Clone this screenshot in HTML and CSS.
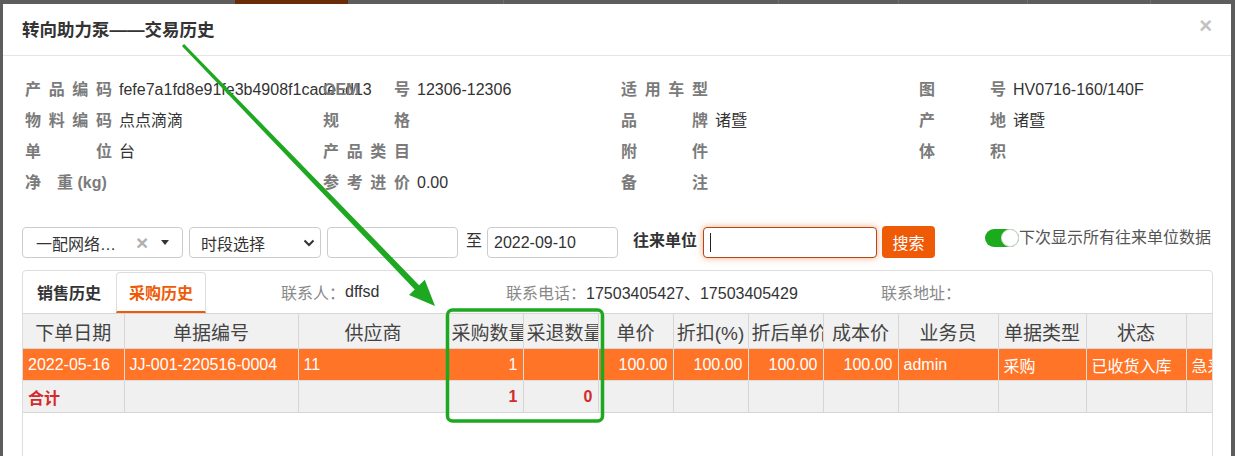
FILE: index.html
```html
<!DOCTYPE html>
<html>
<head>
	<meta charset="utf-8">
	<title>交易历史</title>
	<link rel="stylesheet" href="styles.css">
</head>
<body>
	<div class="strip">
		<span class="strip-btn"></span>
		<span class="strip-sep sep1"></span>
		<span class="strip-sep sep2"></span>
		<span class="strip-sep sep3"></span>
		<span class="strip-sep sep4"></span>
		<span class="strip-sep sep5"></span>
	</div>

	<div class="modal">
		<div class="modal-head">
			<h3 class="modal-title">转向助力泵——交易历史</h3>
			<span class="close">×</span>
		</div>

		<div class="info">
			<div class="field"><span class="lbl">产 品 编 码</span><span class="val">fefe7a1fd8e91fe3b4908f1cade5d13</span></div>
			<div class="field"><span class="lbl">OEM 号</span><span class="val">12306-12306</span></div>
			<div class="field"><span class="lbl">适 用 车 型</span><span class="val"></span></div>
			<div class="field"><span class="lbl">图 号</span><span class="val">HV0716-160/140F</span></div>

			<div class="field"><span class="lbl">物 料 编 码</span><span class="val">点点滴滴</span></div>
			<div class="field"><span class="lbl">规 格</span><span class="val"></span></div>
			<div class="field"><span class="lbl">品 牌</span><span class="val">诸暨</span></div>
			<div class="field"><span class="lbl">产 地</span><span class="val">诸暨</span></div>

			<div class="field"><span class="lbl">单 位</span><span class="val">台</span></div>
			<div class="field"><span class="lbl">产 品 类 目</span><span class="val"></span></div>
			<div class="field"><span class="lbl">附 件</span><span class="val"></span></div>
			<div class="field"><span class="lbl">体 积</span><span class="val"></span></div>

			<div class="field"><span class="lbl lbl-kg">净<span class="gap"></span>重 (kg)</span><span class="val"></span></div>
			<div class="field"><span class="lbl">参 考 进 价</span><span class="val">0.00</span></div>
			<div class="field"><span class="lbl">备 注</span><span class="val"></span></div>
			<div class="field"></div>
		</div>

		<div class="filters">
			<div class="box combo">
				<span class="combo-text">一配网络…</span>
				<span class="combo-clear">×</span>
				<span class="combo-caret"></span>
			</div>
			<div class="box select">
				<span>时段选择</span>
				<svg class="chev" width="12" height="8" viewBox="0 0 12 8"><polyline points="1.5,1.5 6,6 10.5,1.5" fill="none" stroke="#333" stroke-width="2"/></svg>
			</div>
			<div class="box date"></div>
			<span class="to">至</span>
			<div class="box date date-end">2022-09-10</div>
			<span class="unit-lbl">往来单位</span>
			<div class="box unit-input"><span class="cursor"></span></div>
			<button class="btn-search">搜索</button>
			<div class="switch-wrap">
				<span class="switch"><span class="knob"></span></span>
				<span class="switch-text">下次显示所有往来单位数据</span>
			</div>
		</div>

		<div class="panel">
			<div class="tabs">
				<span class="tab">销售历史</span>
				<span class="tab active">采购历史</span>
				<span class="contact c1"><em>联系人：</em>dffsd</span>
				<span class="contact c2"><em>联系电话：</em>17503405427、17503405429</span>
				<span class="contact c3"><em>联系地址：</em></span>
			</div>

			<table class="list">
				<colgroup>
					<col class="w-date">
					<col class="w-no">
					<col class="w-sup">
					<col class="w-75"><col class="w-75"><col class="w-75"><col class="w-75"><col class="w-75"><col class="w-75">
					<col class="w-100">
					<col class="w-88">
					<col class="w-100">
					<col class="w-100">
				</colgroup>
				<tr class="head">
					<th>下单日期</th><th>单据编号</th><th>供应商</th><th>采购数量</th><th>采退数量</th><th>单价</th><th>折扣(%)</th><th>折后单价</th><th>成本价</th><th>业务员</th><th>单据类型</th><th>状态</th><th></th>
				</tr>
				<tr class="row-on">
					<td>2022-05-16</td><td>JJ-001-220516-0004</td><td>11</td><td class="num">1</td><td class="num"></td><td class="num">100.00</td><td class="num">100.00</td><td class="num">100.00</td><td class="num">100.00</td><td>admin</td><td>采购</td><td>已收货入库</td><td>急采</td>
				</tr>
				<tr class="total">
					<td>合计</td><td></td><td></td><td class="num">1</td><td class="num">0</td><td></td><td></td><td></td><td></td><td></td><td></td><td></td><td></td>
				</tr>
			</table>
		</div>
	</div>

	<svg class="mark" width="1235" height="456" viewBox="0 0 1235 456">
		<polygon points="184.1,44 419.1,285.2 424.8,279.7 435,306 409,294.9 414.7,289.4 181.9,46" fill="#1ea822"/>
		<rect x="447.5" y="310" width="155" height="111" rx="5" fill="none" stroke="#1ea822" stroke-width="3.5"/>
	</svg>
</body>
</html>
```

FILE: styles.css
```css
body{
	margin: 0;
	padding: 0;
	background: #5d5d5d;
	height: 456px;
	overflow: hidden;
	font-family: "Liberation Sans", "Noto Sans CJK SC", sans-serif;
	color: #333;
}

/* page under the dialog */
.strip{
	display: flex;
	height: 4px;
}
.strip-btn{
	width: 113px;
	margin-left: 235px;
	background: #6a2c06;
}
.strip-sep{
	width: 1px;
	background: #6f6f6f;
}
.sep1{ margin-left: 155px; }
.sep2{ margin-left: 274px; }
.sep3{ margin-left: 119px; }
.sep4{ margin-left: 128px; }
.sep5{ margin-left: 122px; }

.modal{
	background: #fff;
	margin: 0 4px 0 3px;
	height: 452px;
	overflow: hidden;
}
.modal-head{
	height: 51px;
	border-bottom: 1px solid #e5e5e5;
	padding: 0 19px;
	display: flex;
	align-items: center;
	justify-content: space-between;
}
.modal-title{
	margin: 0;
	font-size: 17.5px;
	font-weight: bold;
	color: #333;
	line-height: 24px;
}
.close{
	color: #c2c2c2;
	font-size: 22px;
	font-weight: bold;
	line-height: 20px;
	margin-top: -8px;
}

/* product info */
.info{
	display: grid;
	grid-template-columns: repeat(4, 298px);
	grid-auto-rows: 31px;
	padding: 18px 0 0 22px;
	font-size: 16px;
}
.field{
	display: flex;
	align-items: center;
	white-space: nowrap;
	min-width: 0;
}
.lbl{
	flex: 0 0 auto;
	width: 87px;
	margin-right: 7px;
	text-align: justify;
	text-align-last: justify;
	font-weight: bold;
	color: #7b7b7b;
	line-height: 20px;
}
.lbl-kg{
	text-align-last: left;
}
.gap{
	display: inline-block;
	width: 16px;
}
.val{
	flex: 0 0 auto;
	color: #333;
	line-height: 20px;
}

/* filter row */
.filters{
	display: flex;
	align-items: flex-start;
	margin: 28px 0 0 19px;
	height: 32px;
	font-size: 16px;
}
.box{
	box-sizing: border-box;
	height: 31px;
	margin-top: 1px;
	border: 1px solid #ccc;
	border-radius: 4px;
	display: flex;
	align-items: center;
	background: #fff;
}
.combo{
	width: 161px;
	padding-left: 13px;
}
.combo-text{
	width: 88px;
	white-space: nowrap;
}
.combo-clear{
	color: #b0b0b0;
	font-weight: bold;
	font-size: 21px;
	margin-left: 12px;
	line-height: 20px;
}
.combo-caret{
	width: 0;
	height: 0;
	border-left: 4px solid transparent;
	border-right: 4px solid transparent;
	border-top: 5px solid #333;
	margin-left: 13px;
}
.select{
	width: 132px;
	margin-left: 6px;
	padding: 0 5px 0 11px;
	justify-content: space-between;
}
.date{
	width: 131px;
	margin-left: 6px;
	padding-left: 6px;
}
.to{
	margin: 5px 5px 0 8px;
	line-height: 20px;
}
.date-end{
	margin-left: 0;
}
.unit-lbl{
	margin: 5px 0 0 15px;
	font-weight: bold;
	line-height: 20px;
}
.unit-input{
	width: 174px;
	margin-left: 6px;
	border-color: #b04a12;
	box-shadow: 0 0 7px rgba(225, 100, 40, .55);
}
.cursor{
	width: 1px;
	height: 19px;
	background: #222;
	margin-left: 6px;
}
.btn-search{
	height: 32px;
	width: 53px;
	margin-left: 5px;
	border: 0;
	border-radius: 4px;
	background: #ef5a07;
	color: #fff;
	font-family: inherit;
	font-size: 16px;
	padding: 0;
}
.switch-wrap{
	display: flex;
	align-items: center;
	margin: 2px 0 0 50px;
}
.switch{
	display: flex;
	justify-content: flex-end;
	width: 34px;
	height: 18px;
	border-radius: 9px;
	background: #1cab1c;
}
.knob{
	box-sizing: border-box;
	width: 18px;
	height: 18px;
	border-radius: 50%;
	background: #fff;
	border: 1px solid #d5d5d5;
}
.switch-text{
	color: #555;
	line-height: 20px;
}

/* history panel */
.panel{
	margin: 12px 18px 0 19px;
	height: 240px;
	border: 1px solid #ddd;
	border-radius: 4px 4px 0 0;
	overflow: hidden;
}
.tabs{
	display: flex;
	height: 42px;
	font-size: 16px;
}
.tab{
	display: flex;
	align-items: center;
	padding: 0 15px 0 14px;
	font-weight: bold;
	color: #333;
}
.tab.active{
	box-sizing: border-box;
	margin-top: 1px;
	padding: 0 12px;
	border: 1px solid #ddd;
	border-bottom: 2px solid #ef5a07;
	border-radius: 4px 4px 0 0;
	color: #ef5a07;
}
.contact{
	display: flex;
	align-items: center;
	white-space: nowrap;
	color: #333;
}
.contact em{
	font-style: normal;
	color: #888;
}
.c1{ margin-left: 75px; width: 225px; }
.c2{ width: 375px; }

.list{
	border-collapse: collapse;
	table-layout: fixed;
	width: 1263px;
}
.w-date{ width: 101px; }
.w-no{ width: 174px; }
.w-sup{ width: 150px; }
.w-75{ width: 75px; }
.w-88{ width: 88px; }
.w-100{ width: 100px; }

.list th,
.list td{
	border: 1px solid #d6d6d6;
	white-space: nowrap;
	overflow: hidden;
	padding: 0 5px;
}
.list tr > :first-child{
	border-left: 0;
}
.list th{
	height: 34px;
	background: #f1f1f1;
	font-size: 19px;
	font-weight: normal;
	color: #444;
	text-align: center;
	padding: 0 3px;
}
.list td{
	height: 31px;
	font-size: 16px;
	text-align: left;
}
.list td.num{
	text-align: right;
}
.row-on td{
	background: #ff7426;
	color: #fff;
	border-color: #dedede;
}
.total td{
	background: #f0f0f0;
	color: #d42a2a;
	font-weight: bold;
}

/* annotation drawn on the screenshot */
.mark{
	position: absolute;
	left: 0;
	top: 0;
	pointer-events: none;
}
```
